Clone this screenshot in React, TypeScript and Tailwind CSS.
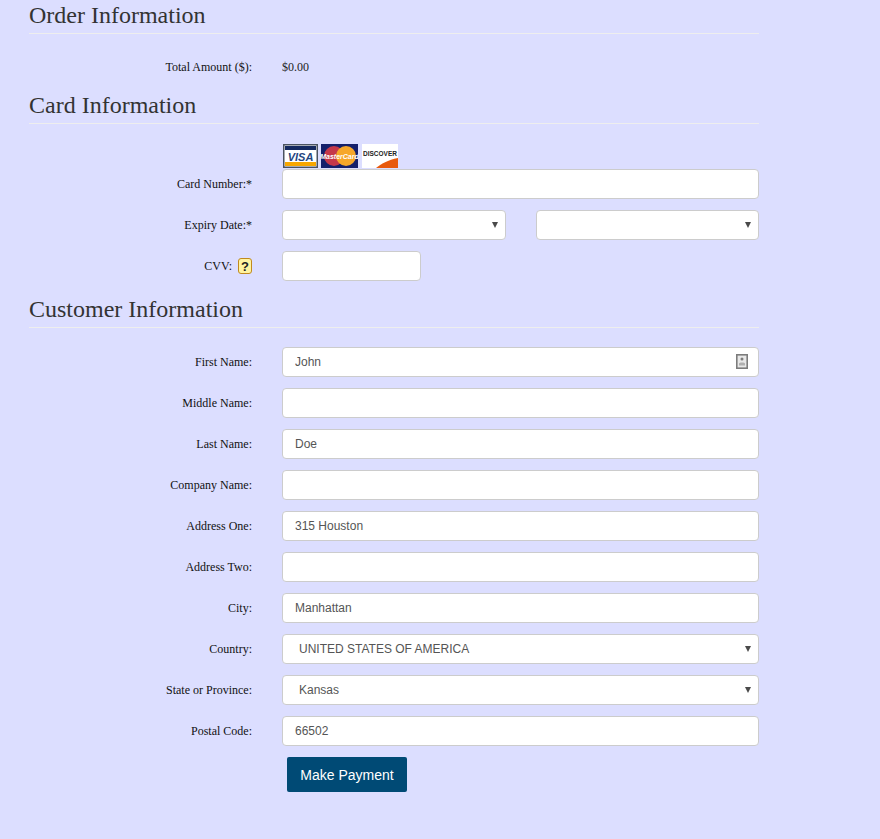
const inputClass =
  "w-full h-[30px] rounded-[4px] border border-[#cccccc] bg-white pl-[12px] pr-3 text-[12px] text-[#555555] font-['Liberation_Sans',sans-serif] outline-none";
const selectClass =
  "w-full h-[30px] appearance-none rounded-[4px] border border-[#cccccc] bg-white pl-[16px] text-[12px] text-[#555555] font-['Liberation_Sans',sans-serif] outline-none";

function Heading({ children }: { children: string }) {
  return (
    <h2 className="h-[34px] border-b border-[#eeeeee] text-[24px] leading-[30px] text-[#333333]">
      {children}
    </h2>
  );
}

function Row({ label, children }: { label: React.ReactNode; children: React.ReactNode }) {
  return (
    <div className="flex items-center">
      <div className="w-[223px] text-right text-[12px] text-[#111111]">{label}</div>
      <div className="ml-[30px] w-[477px]">{children}</div>
    </div>
  );
}

function Select({ value }: { value?: string }) {
  return (
    <div className="relative">
      <select className={selectClass}>
        <option>{value}</option>
      </select>
      <svg className="pointer-events-none absolute right-[8px] top-[12px]" width="6" height="6" viewBox="0 0 6 6">
        <path d="M0 0 H6 L3 6 Z" fill="#4a4a4a" />
      </svg>
    </div>
  );
}

function CardLogos() {
  return (
    <div className="flex h-[25px] items-start gap-[3px] pl-[1px] pt-[1px]">
      <svg width="35" height="24" viewBox="0 0 35 24">
        <rect width="35" height="24" fill="#4a5260" />
        <rect x="1.5" y="1.5" width="32" height="21" fill="#ffffff" />
        <rect x="2" y="2" width="31" height="4" fill="#14285f" />
        <rect x="2" y="18" width="31" height="4" fill="#f7a600" />
        <text x="17.5" y="16.5" textAnchor="middle" fontSize="11" fontWeight="700" fontStyle="italic" fill="#24457f" fontFamily="Liberation Sans, sans-serif">VISA</text>
      </svg>
      <svg width="37" height="24" viewBox="0 0 37 24">
        <rect width="37" height="24" fill="#15206b" />
        <circle cx="13" cy="12" r="10" fill="#c5384a" />
        <circle cx="25" cy="12" r="10" fill="#f6a72a" />
        <text x="18.5" y="14.5" textAnchor="middle" fontSize="7" fontWeight="700" fontStyle="italic" fill="#ffffff" fontFamily="Liberation Sans, sans-serif">MasterCard</text>
      </svg>
      <svg width="36" height="24" viewBox="0 0 36 24" className="ml-[1px]">
        <rect width="36" height="24" fill="#ffffff" />
        <path d="M36 14 C26 16 19 20 14 24 L36 24 Z" fill="#e8590c" />
        <text x="18" y="12" textAnchor="middle" fontSize="6.5" fontWeight="700" fill="#222222" fontFamily="Liberation Sans, sans-serif">DISCOVER</text>
      </svg>
    </div>
  );
}

function HelpIcon() {
  return (
    <span className="ml-[6px] inline-flex h-[16px] w-[14px] items-center justify-center rounded-[3px] border border-[#c08a1e] bg-[#fff3a0] font-['Liberation_Sans',sans-serif] text-[13px] font-bold leading-none text-[#222222]">
      ?
    </span>
  );
}

function ContactIcon() {
  return (
    <svg className="absolute right-[11px] top-[7px]" width="12" height="15" viewBox="0 0 12 15">
      <rect x="0.8" y="0.8" width="10.4" height="13.4" fill="#e8e8e8" stroke="#7c7c7c" strokeWidth="1.6" />
      <circle cx="6" cy="5" r="1.5" fill="#7c7c7c" />
      <path d="M3 11.5 V9.5 C3 8 9 8 9 9.5 V11.5 Z" fill="#b0b0b0" />
    </svg>
  );
}

export default function App() {
  return (
    <div className="min-h-screen bg-[#dcdeff] font-['Liberation_Serif',serif]">
      <div className="w-[759px] pl-[29px]">
        <Heading>Order Information</Heading>

        <div className="flex h-[56px] items-center pt-[10px] text-[12px]">
          <div className="w-[223px] text-right text-[#111111]">Total Amount ($):</div>
          <div className="ml-[30px] text-[#222222]">$0.00</div>
        </div>

        <Heading>Card Information</Heading>

        <div className="mt-[19px] flex flex-col">
          <div className="ml-[253px]">
            <CardLogos />
          </div>
          <div className="mt-[1px] flex flex-col gap-[11px]">
            <Row label="Card Number:*">
              <input className={inputClass} />
            </Row>
            <Row label="Expiry Date:*">
              <div className="flex gap-[30px]">
                <div className="w-[224px]">
                  <Select />
                </div>
                <div className="w-[223px]">
                  <Select />
                </div>
              </div>
            </Row>
            <Row
              label={
                <span className="inline-flex items-center">
                  CVV:
                  <HelpIcon />
                </span>
              }
            >
              <div className="w-[139px]">
                <input className={inputClass} />
              </div>
            </Row>
          </div>
        </div>

        <div className="mt-[13px]">
          <Heading>Customer Information</Heading>
        </div>

        <div className="mt-[19px] flex flex-col gap-[11px]">
          <Row label="First Name:">
            <div className="relative">
              <input className={inputClass} defaultValue="John" />
              <ContactIcon />
            </div>
          </Row>
          <Row label="Middle Name:">
            <input className={inputClass} />
          </Row>
          <Row label="Last Name:">
            <input className={inputClass} defaultValue="Doe" />
          </Row>
          <Row label="Company Name:">
            <input className={inputClass} />
          </Row>
          <Row label="Address One:">
            <input className={inputClass} defaultValue="315 Houston" />
          </Row>
          <Row label="Address Two:">
            <input className={inputClass} />
          </Row>
          <Row label="City:">
            <input className={inputClass} defaultValue="Manhattan" />
          </Row>
          <Row label="Country:">
            <Select value="UNITED STATES OF AMERICA" />
          </Row>
          <Row label="State or Province:">
            <Select value="Kansas" />
          </Row>
          <Row label="Postal Code:">
            <input className={inputClass} defaultValue="66502" />
          </Row>
        </div>

        <div className="mt-[11px] pb-[47px] pl-[258px]">
          <button className="h-[35px] w-[120px] rounded-[2px] bg-[#004a75] pt-[1px] font-['Liberation_Sans',sans-serif] text-[14px] text-white">
            Make Payment
          </button>
        </div>
      </div>
    </div>
  );
}
